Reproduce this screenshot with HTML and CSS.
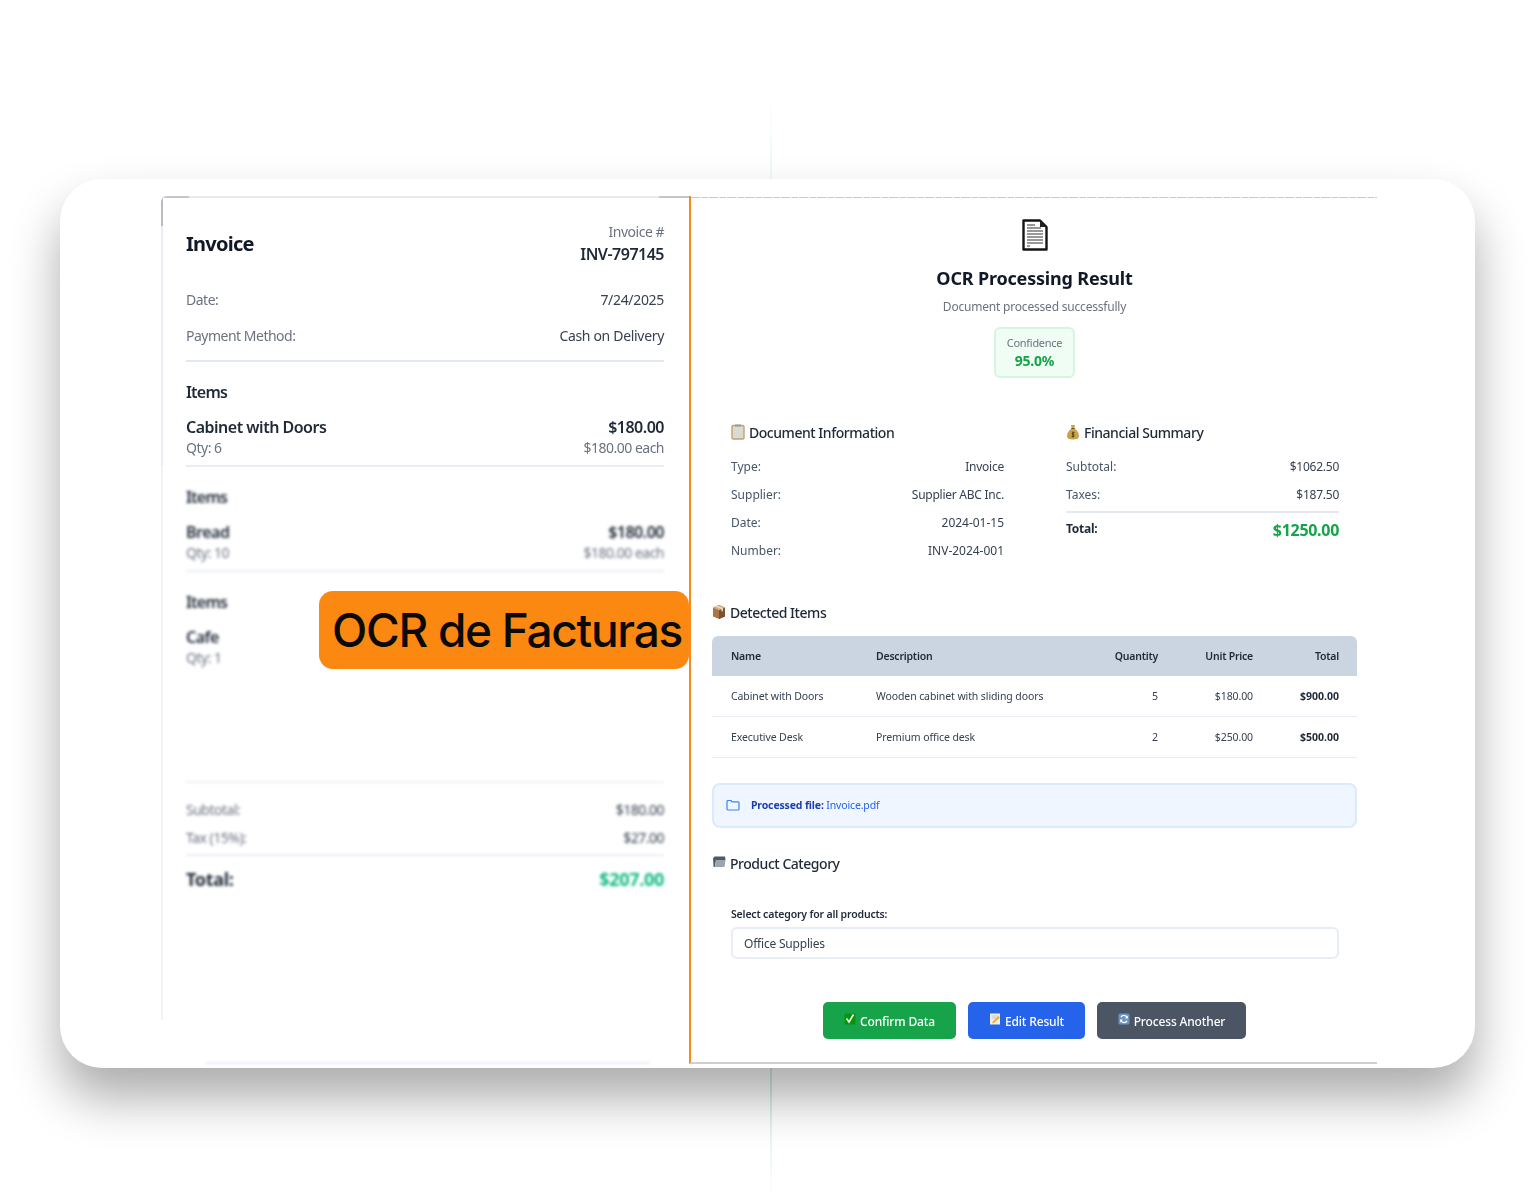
FILE: index.html
```html
<!DOCTYPE html>
<html lang="en">
<head>
<meta charset="utf-8">
<title>OCR de Facturas</title>
<link rel="stylesheet" href="styles.css">
</head>
<body>
<div class="guide"></div>
<main class="card">
  <section class="invoice">
    <div class="inv-sharp">
      <header class="inv-head">
        <h1 class="inv-title">Invoice</h1>
        <div class="inv-num">
          <div class="inv-num-label">Invoice #</div>
          <div class="inv-num-value">INV-797145</div>
        </div>
      </header>
      <div class="inv-meta">
        <div class="inv-row"><span class="muted">Date:</span><span class="dark">7/24/2025</span></div>
        <div class="inv-row"><span class="muted">Payment Method:</span><span class="dark">Cash on Delivery</span></div>
      </div>
      <div class="inv-items">
        <h2 class="inv-items-title">Items</h2>
        <div class="inv-item">
          <div class="inv-item-line"><span class="strong">Cabinet with Doors</span><span class="strong">$180.00</span></div>
          <div class="inv-item-line sub"><span>Qty: 6</span><span>$180.00 each</span></div>
        </div>
      </div>
    </div>
    <div class="inv-blur">
      <div class="inv-items">
        <h2 class="inv-items-title">Items</h2>
        <div class="inv-item">
          <div class="inv-item-line"><span class="strong">Bread</span><span class="strong">$180.00</span></div>
          <div class="inv-item-line sub"><span>Qty: 10</span><span>$180.00 each</span></div>
        </div>
      </div>
      <div class="inv-items plain">
        <h2 class="inv-items-title">Items</h2>
        <div class="inv-item">
          <div class="inv-item-line"><span class="strong">Cafe</span></div>
          <div class="inv-item-line sub"><span>Qty: 1</span></div>
        </div>
      </div>
      <div class="inv-totals">
        <div class="inv-total-row"><span class="muted">Subtotal:</span><span class="dark">$180.00</span></div>
        <div class="inv-total-row"><span class="muted">Tax (15%):</span><span class="dark">$27.00</span></div>
        <div class="inv-grand"><span>Total:</span><span class="inv-grand-value">$207.00</span></div>
      </div>
      <div class="inv-foot"></div>
    </div>
  </section>

  <section class="result">
    <svg class="doc-icon" viewBox="0 0 26 32" aria-hidden="true">
      <path d="M1.5 1.5H18L24.5 8V30.5H1.5Z" fill="#fff" stroke="#141414" stroke-width="2.4" stroke-linejoin="round"/>
      <path d="M18 1.5V8H24.5Z" fill="#222"/>
      <path d="M5 6h8M5 9h14M5 12h16M5 15h16M5 18h16M5 21h16M5 24h16M5 27h3" stroke="#777" stroke-width="1.6"/>
    </svg>
    <h1 class="res-title">OCR Processing Result</h1>
    <p class="res-sub">Document processed successfully</p>
    <div class="confidence">
      <span class="conf-label">Confidence</span>
      <span class="conf-value">95.0%</span>
    </div>

    <div class="info-grid">
      <div>
        <h2 class="sec-title">
          <svg class="sec-icon" viewBox="0 0 14 16" aria-hidden="true"><rect x="1" y="1.5" width="12" height="13.5" rx="1.2" fill="#d9d9d6" stroke="#c99f6b" stroke-width="1.4"/><rect x="4" y=".5" width="6" height="2" fill="#9a9a9a"/></svg>
          Document Information
        </h2>
        <div class="info-row"><span>Type:</span><span>Invoice</span></div>
        <div class="info-row"><span>Supplier:</span><span>Supplier ABC Inc.</span></div>
        <div class="info-row"><span>Date:</span><span class="digits">2024-01-15</span></div>
        <div class="info-row"><span>Number:</span><span class="digits">INV-2024-001</span></div>
      </div>
      <div>
        <h2 class="sec-title">
          <svg class="sec-icon" viewBox="0 0 14 16" aria-hidden="true"><path d="M5 1h4L8.4 4.4C11 6 13 9 13 12c0 2.500-2 3.500-6 3.500S1 14.500 1 12c0-3 2-6 4.600-7.600Z" fill="#c9a24a"/><path d="M5.300 4.500h3.400" stroke="#6b5320" stroke-width="1"/><path d="M7 7.500v6M8.500 8.800H6.300v2h1.500v1.800H5.600" fill="none" stroke="#4a3c18" stroke-width=".9"/></svg>
          Financial Summary
        </h2>
        <div class="info-row"><span>Subtotal:</span><span>$1062.50</span></div>
        <div class="info-row"><span>Taxes:</span><span>$187.50</span></div>
        <div class="fin-total"><span class="fin-total-label">Total:</span><span class="fin-total-value">$1250.00</span></div>
      </div>
    </div>

    <h2 class="sec-title flush items-title">
      <svg class="sec-icon" viewBox="0 0 14 16" aria-hidden="true"><path d="M7 1l6 2.500v9L7 15l-6-2.500v-9Z" fill="#a9764a"/><path d="M7 6.200L13 3.500v9L7 15Z" fill="#7a5230"/><path d="M1 3.500L7 1l6 2.500L7 6.200Z" fill="#d9b083"/><path d="M3.500 2.500l6 2.600v2.500l1.500-.7V4.300l-6-2.600Z" fill="#eee0c8"/></svg>
      Detected Items
    </h2>
    <table class="items">
      <thead>
        <tr><th class="c-name">Name</th><th class="c-desc">Description</th><th class="c-qty">Quantity</th><th class="c-price">Unit Price</th><th class="c-total">Total</th></tr>
      </thead>
      <tbody>
        <tr><td>Cabinet with Doors</td><td>Wooden cabinet with sliding doors</td><td class="num">5</td><td class="num">$180.00</td><td class="num bold">$900.00</td></tr>
        <tr><td>Executive Desk</td><td>Premium office desk</td><td class="num">2</td><td class="num">$250.00</td><td class="num bold">$500.00</td></tr>
      </tbody>
    </table>

    <div class="file-note">
      <svg class="file-icon" viewBox="0 0 14 12" aria-hidden="true"><path d="M1 2.500A1 1 0 0 1 2 1.500h3l1.200 1.300H12a1 1 0 0 1 1 1V10a1 1 0 0 1-1 1H2a1 1 0 0 1-1-1Z" fill="none" stroke="#3b82f6" stroke-width="1.200" stroke-linejoin="round"/></svg>
      <span class="file-text"><strong>Processed file:</strong> Invoice.pdf</span>
    </div>

    <h2 class="sec-title flush cat-title">
      <svg class="sec-icon" viewBox="0 0 14 16" aria-hidden="true"><path d="M1 3.500L1.600 12H2.800L4 5h9.500L13 1.500H2.500Z" fill="#4f5a63"/><path d="M3 12L4 5h9.500L12.500 12Z" fill="#9aa6af"/></svg>
      Product Category
    </h2>
    <label class="cat-label">Select category for all products:</label>
    <div class="select">Office Supplies</div>

    <div class="actions">
      <button class="btn btn-green" type="button">
        <svg class="btn-icon" viewBox="0 0 12 12" aria-hidden="true"><rect x=".5" y=".5" width="11" height="11" rx="1.500" fill="#089408"/><path d="M2.500 5.500L5 9l4.500-7.500" fill="none" stroke="#fff" stroke-width="1.600"/></svg>
        Confirm Data
      </button>
      <button class="btn btn-blue" type="button">
        <svg class="btn-icon" viewBox="0 0 12 12" aria-hidden="true"><rect x="1" y=".5" width="10" height="11" fill="#f1efe8"/><path d="M2.500 3h7M2.500 5h5" stroke="#bbb" stroke-width=".8"/><path d="M3 10.500l1-2.500 5.500-5 1.500 1.500-5.500 5Z" fill="#f0ae2e"/></svg>
        Edit Result
      </button>
      <button class="btn btn-gray" type="button">
        <svg class="btn-icon" viewBox="0 0 12 12" aria-hidden="true"><rect x=".5" y=".5" width="11" height="11" rx="1.500" fill="#6c93bd"/><path d="M9 4.500A3.300 3.300 0 0 0 3 4.300M3 7.500A3.300 3.300 0 0 0 9 7.700" fill="none" stroke="#fff" stroke-width="1.300"/><path d="M9.800 2.600v2.800H7zM2.200 9.400V6.600H5z" fill="#fff"/></svg>
        Process Another
      </button>
    </div>
  </section>

  <div class="badge">OCR de Facturas</div>
</main>
</body>
</html>
```

FILE: styles.css
```css
* { box-sizing: border-box; }
html, body { margin: 0; padding: 0; background: #fff; }
body {
  position: relative;
  height: 1200px;
  overflow: hidden;
  padding: 179px 60px 132px;
  font-family: "Noto Sans", "Open Sans", sans-serif;
  color: #111827;
}
h1, h2, p { margin: 0; }

.guide {
  position: absolute;
  left: 770px;
  top: 90px;
  width: 2px;
  height: 1110px;
  background: linear-gradient(to bottom, #fff 0, #e6f8f2 10%, #d8f5ea 50%, #d0f0e4 90%, #fff 100%);
}

.card {
  position: relative;
  display: flex;
  height: 889px;
  padding: 17px 98px 4px 101px;
  background: #fff;
  border-radius: 42px;
  box-shadow: 0 30px 50px rgba(0, 0, 0, .33);
}

/* Invoice panel */
.invoice {
  display: flex;
  flex-direction: column;
  width: 528px;
  padding: 26px 25px 0;
  border-top-left-radius: 6px;
  background-image:
    linear-gradient(to right, #c3c6cb 0 28px, #e6ebf3 28px 498px, #c3c6cb 498px 528px),
    linear-gradient(to bottom, #b9bcc1 0 30px, #e8edf5 30px 270px, #f1f3f9 270px 824px, transparent 824px);
  background-size: 100% 2px, 2px 100%;
  background-repeat: no-repeat;
}
.inv-sharp { filter: blur(.3px); }
.inv-head { display: flex; justify-content: space-between; align-items: center; }
.inv-title { font-size: 20px; line-height: 26px; font-weight: 700; letter-spacing: -.75px; color: #111827; }
.inv-num { text-align: right; }
.inv-num-label { font-size: 14px; line-height: 20px; color: #6b7280; letter-spacing: -.5px; }
.inv-num-value { font-size: 16px; line-height: 24px; font-weight: 600; letter-spacing: -.5px; color: #1f2937; }
.inv-meta { margin-top: 15px; padding-bottom: 7px; border-bottom: 2px solid #e2e8f0; }
.inv-row { display: flex; justify-content: space-between; align-items: center; height: 36px; font-size: 14px; letter-spacing: -.5px; }
.inv-row .dark { letter-spacing: -.32px; }
.muted { color: #6b7280; }
.dark { color: #374151; }
.inv-items { padding-top: 18px; border-bottom: 2px solid #e8edf3; padding-bottom: 7px; }
.inv-items.plain { border-bottom: 0; padding-bottom: 0; }
.inv-items-title { font-size: 16px; line-height: 24px; font-weight: 600; letter-spacing: -.8px; color: #1f2937; margin-bottom: 12px; }
.inv-item-line { display: flex; justify-content: space-between; font-size: 16px; line-height: 22px; letter-spacing: -.5px; }
.inv-item-line.sub { font-size: 14px; line-height: 20px; color: #6b7280; }
.strong { font-weight: 600; color: #1f2937; }
.inv-blur { display: flex; flex-direction: column; flex: 1; filter: blur(1.4px); }
.inv-totals { margin-top: 113px; padding-top: 12px; border-top: 2px solid #eef1f6; }
.inv-total-row { display: flex; justify-content: space-between; align-items: center; height: 28px; font-size: 14px; letter-spacing: -.5px; }
.inv-grand {
  display: flex;
  justify-content: space-between;
  align-items: center;
  margin-top: 3px;
  padding-top: 9px;
  border-top: 2px solid #e8edf3;
  font-size: 18px;
  line-height: 28px;
  font-weight: 700;
  letter-spacing: -.3px;
  color: #1f2937;
}
.inv-grand-value { color: #10b981; }
.inv-foot { margin: auto 14px 0 19px; height: 2px; background: #e8edf5; }

/* Result panel */
.result {
  display: flex;
  flex-direction: column;
  width: 688px;
  padding: 23px 20px 0 21px;
  border-left: 2px solid #f58a1f;
  border-bottom: 2px solid #cfcfcf;
  background-image: repeating-linear-gradient(to right, #c9c9c9 0 9px, #ececec 9px 11px, #c9c9c9 11px 17px, #fff 17px 18px);
  background-size: 100% 1px;
  background-position: 0 1px;
  background-repeat: no-repeat;
  filter: blur(.3px);
}
.doc-icon { width: 26px; height: 32px; align-self: center; flex: none; }
.res-title { margin-top: 14px; text-align: center; font-size: 18px; line-height: 26px; font-weight: 700; letter-spacing: -.18px; color: #111827; }
.res-sub { margin-top: 7px; text-align: center; font-size: 12px; line-height: 18px; letter-spacing: -.2px; color: #6b7280; }
.confidence {
  display: flex;
  flex-direction: column;
  align-items: center;
  align-self: center;
  width: 81px;
  height: 51px;
  margin-top: 11px;
  padding-top: 6px;
  background: #f0fdf4;
  border: 2px solid #d6f5e0;
  border-radius: 6px;
}
.conf-label { font-size: 11px; line-height: 16px; letter-spacing: -.3px; color: #6b7280; }
.conf-value { font-size: 14px; line-height: 20px; font-weight: 700; letter-spacing: -.25px; color: #16a34a; }

.info-grid { display: grid; grid-template-columns: 273px 273px; column-gap: 62px; margin-top: 45px; padding-left: 19px; }
.sec-title { display: flex; align-items: center; gap: 4px; font-size: 14px; line-height: 20px; font-weight: 500; letter-spacing: -.46px; color: #1f2937; }
.sec-icon { width: 14px; height: 16px; flex: none; position: relative; top: -1px; }
.info-grid .sec-title { margin-bottom: 9px; }
.info-row { display: flex; justify-content: space-between; align-items: center; height: 28px; font-size: 12px; letter-spacing: -.25px; color: #374151; }
.info-row span:first-child { color: #475569; letter-spacing: 0; }
.info-row .digits { letter-spacing: -.02px; }
.fin-total { display: flex; justify-content: space-between; align-items: center; height: 32px; margin-top: 3px; padding-top: 3px; border-top: 2px solid #e5e9ef; }
.fin-total-label { font-size: 12px; font-weight: 700; letter-spacing: -.25px; color: #1f2937; position: relative; top: -1px; }
.fin-total-value { font-size: 16px; font-weight: 700; letter-spacing: -.3px; color: #16a34a; }

.items-title { margin-top: 39px; }
.items { width: 645px; margin-top: 13px; border-collapse: separate; border-spacing: 0; table-layout: fixed; font-size: 10.5px; letter-spacing: -.1px; color: #374151; }
.items th { height: 40px; padding: 0 18px; background: #cbd5e1; font-weight: 600; letter-spacing: -.22px; text-align: left; color: #1f2937; }
.items th:first-child { border-top-left-radius: 6px; }
.items th:last-child { border-top-right-radius: 6px; }
.items td { height: 41px; padding: 0 18px; border-bottom: 1.5px solid #e8edf3; }
.items th:first-child, .items th:nth-child(2), .items td:first-child, .items td:nth-child(2) { padding-left: 19px; }
.c-name { width: 145px; }
.c-desc { width: 224px; }
.c-qty { width: 95px; }
.c-price { width: 95px; }
.c-total { width: 86px; }
.items .c-qty, .items .c-price, .items .c-total, .num { text-align: right; }
.items td.bold { font-weight: 700; color: #1f2937; letter-spacing: 0; }

.file-note {
  display: flex;
  align-items: center;
  gap: 11px;
  height: 45px;
  margin-top: 25px;
  padding: 0 0 2px 12px;
  background: #eff6ff;
  border: 2px solid #dbeafe;
  border-radius: 8px;
}
.file-icon { width: 14px; height: 12px; flex: none; }
.file-text { font-size: 10.5px; letter-spacing: -.15px; color: #2563eb; }
.file-text strong { font-weight: 700; color: #1e40af; }

.cat-title { margin-top: 26px; }
.cat-label { margin: 32px 0 0 19px; font-size: 10.5px; line-height: 16px; font-weight: 600; letter-spacing: -.17px; color: #1f2937; }
.select {
  display: flex;
  align-items: center;
  width: 608px;
  height: 32px;
  margin: 5px 0 0 19px;
  padding-left: 11px;
  border: 2px solid #e8ecf4;
  border-radius: 6px;
  font-size: 12px;
  letter-spacing: -.2px;
  color: #374151;
}
.actions { display: flex; justify-content: center; gap: 12px; margin-top: 43px; }
.btn {
  display: flex;
  align-items: center;
  justify-content: center;
  gap: 4px;
  height: 37px;
  padding: 1px 0 0;
  border: 0;
  border-radius: 5px;
  font-family: inherit;
  font-size: 12px;
  font-weight: 500;
  letter-spacing: -.15px;
  color: #fff;
}
.btn-icon { width: 12px; height: 12px; flex: none; position: relative; top: -2px; }
.btn-green { width: 133px; background: #16a34a; }
.btn-blue { width: 117px; background: #2563eb; }
.btn-gray { width: 149px; background: #4b5563; }

/* Overlay badge */
.badge {
  position: absolute;
  left: 259px;
  top: 412px;
  display: flex;
  align-items: center;
  justify-content: center;
  width: 370px;
  height: 78px;
  padding-left: 6px;
  background: #fb8811;
  border-radius: 14px;
  font-family: Inter, "Liberation Sans", sans-serif;
  font-size: 46px;
  font-weight: 500;
  letter-spacing: -1.3px;
  color: #0a0a0a;
}
```
